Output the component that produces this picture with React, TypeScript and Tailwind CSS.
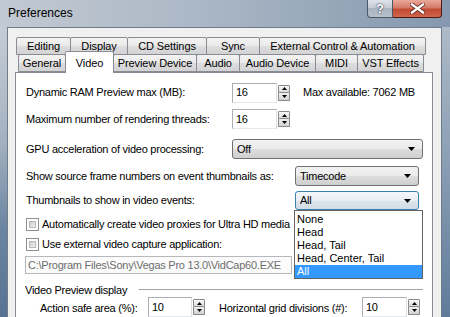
import React from "react";

const topTabs = [
  { label: "Editing", w: "w-[55px]" },
  { label: "Display", w: "w-[58px]" },
  { label: "CD Settings", w: "w-[80px]" },
  { label: "Sync", w: "w-[54px]" },
  { label: "External Control & Automation", w: "w-[167px]" },
];

const bottomTabs = [
  { label: "General", w: "w-[48px]", sel: false },
  { label: "Video", w: "w-[49px]", sel: true },
  { label: "Preview Device", w: "w-[84px]", sel: false },
  { label: "Audio", w: "w-[44px]", sel: false },
  { label: "Audio Device", w: "w-[77px]", sel: false },
  { label: "MIDI", w: "w-[43px]", sel: false },
  { label: "VST Effects", w: "w-[67px]", sel: false },
];

function Tab({ label, w }: { label: string; w: string }) {
  return (
    <div
      className={`${w} h-[18px] shrink-0 flex items-center justify-center border border-[#898c95] -ml-px first:ml-0 rounded-t-[2px] bg-[linear-gradient(#f3f3f3,#e9e9e9_50%,#dddddd_50%,#d3d3d3)] leading-none`}
    >
      {label}
    </div>
  );
}

function SelTab({ label, w }: { label: string; w: string }) {
  return (
    <div
      className={`${w} h-[22px] shrink-0 relative z-10 -mb-px -ml-px flex items-start justify-center pt-[6px] border border-b-0 border-[#898c95] rounded-t-[2px] bg-white leading-none`}
    >
      {label}
    </div>
  );
}

function Arrow() {
  return (
    <svg width="7" height="4" viewBox="0 0 7 4" className="shrink-0">
      <path d="M0 0 H7 L3.5 4 Z" fill="#000" />
    </svg>
  );
}

function Spin() {
  return (
    <div className="flex flex-col w-[12px] h-[16px] ml-px shrink-0">
      <div className="h-[8px] border border-[#8a8a8a] rounded-t-[1px] bg-[linear-gradient(#fbfbfb,#dcdcdc)] flex items-center justify-center">
        <svg width="5" height="3" viewBox="0 0 5 3">
          <path d="M0 3 L2.5 0 L5 3 Z" fill="#000" />
        </svg>
      </div>
      <div className="h-[8px] border border-t-0 border-[#8a8a8a] rounded-b-[1px] bg-[linear-gradient(#f0f0f0,#d2d2d2)] flex items-center justify-center">
        <svg width="5" height="3" viewBox="0 0 5 3">
          <path d="M0 0 L5 0 L2.5 3 Z" fill="#000" />
        </svg>
      </div>
    </div>
  );
}

function NumInput({ value, w }: { value: string; w: string }) {
  return (
    <div
      className={`${w} h-[20px] shrink-0 border border-[#abadb3] border-r-[#dbdfe6] border-b-[#e3e9ef] bg-white flex items-center pl-[3px]`}
    >
      {value}
    </div>
  );
}

function Combo({
  value,
  w,
  h,
  focused,
  children,
}: {
  value: string;
  w: string;
  h: string;
  focused?: boolean;
  children?: React.ReactNode;
}) {
  return (
    <div className={`relative ${w} ${h} shrink-0`}>
      <div
        className={`w-full h-full flex items-center justify-between pl-[4px] pr-[7px] rounded-[3px] border ${
          focused
            ? "border-[#3c7fb1] bg-[linear-gradient(#f4f7fa,#e9eef3_50%,#dde5ec_50%,#d3dde6)]"
            : "border-[#707070] bg-[linear-gradient(#f2f2f2,#ebebeb_50%,#dddddd_50%,#cfcfcf)]"
        }`}
      >
        <span>{value}</span>
        <Arrow />
      </div>
      {children}
    </div>
  );
}

function Check({ label }: { label: string }) {
  return (
    <div className="flex items-center h-[13px]">
      <div className="w-[13px] h-[13px] shrink-0 border border-[#8e8f8f] bg-white p-[2px]">
        <div className="w-full h-full bg-[linear-gradient(135deg,#cbcbcb,#f4f4f4)] border border-[#b8b8b8]" />
      </div>
      <span className="ml-[3px] whitespace-nowrap">{label}</span>
    </div>
  );
}

export default function App() {
  return (
    <div className="w-[450px] h-[317px] overflow-hidden flex flex-col font-['Liberation_Sans',Arial,sans-serif] text-[11px] text-black">
      {/* Title bar */}
      <div className="h-[27px] shrink-0 flex bg-[linear-gradient(to_right,#c2c9d2,#aab7c5_45%,#8598af)]">
        <div className="flex-1 pl-[8px] pt-[6px] text-[12px] leading-[14px]">Preferences</div>
        <div className="flex items-start pr-[8px]">
          <div className="w-[26px] h-[18px] border border-t-0 border-[#4b5867] rounded-bl-[4px] bg-[linear-gradient(#dfe4ea,#c2cad4_50%,#a9b4c1_50%,#b7c1cc)] flex items-center justify-center text-[13px] font-bold text-white leading-none [text-shadow:0_0_2px_#2d3a48,0_0_1px_#2d3a48]">
            ?
          </div>
          <div className="w-[49px] h-[18px] border border-t-0 border-l-0 border-[#4d1a12] rounded-br-[4px] bg-[linear-gradient(#e9a99b,#d47a69_45%,#c24a35_55%,#d0654b)] flex items-center justify-center">
            <svg width="15" height="11" viewBox="0 0 15 11">
              <path d="M2 1.5 L13 9.5 M13 1.5 L2 9.5" stroke="#5a2118" strokeWidth="4" strokeLinecap="square" />
              <path d="M2 1.5 L13 9.5 M13 1.5 L2 9.5" stroke="#ffffff" strokeWidth="2.4" strokeLinecap="square" />
            </svg>
          </div>
        </div>
      </div>

      {/* Body */}
      <div className="flex flex-1 min-h-0">
        <div className="w-[7px] shrink-0 bg-[linear-gradient(#c5ccd4,#a3b1c0_40%,#6a84a1_70%,#587392)]" />
        <div className="w-[435px] shrink-0 bg-[#f0f0f0] border-l border-t border-r border-[#6e7c8b] flex flex-col pt-[9px] pl-[7px] pr-[8px]">
          {/* Tabs row 1 */}
          <div className="flex h-[18px] pl-[1px] shrink-0 tracking-[-0.1px]">
            {topTabs.map((t) => (
              <Tab key={t.label} label={t.label} w={t.w} />
            ))}
          </div>
          {/* Tabs row 2 */}
          <div className="flex items-end h-[18px] pl-[3px] shrink-0 -mt-px tracking-[-0.1px]">
            {bottomTabs.map((t) =>
              t.sel ? (
                <SelTab key={t.label} label={t.label} w={t.w} />
              ) : (
                <Tab key={t.label} label={t.label} w={t.w} />
              )
            )}
          </div>

          {/* Panel */}
          <div className="flex-1 border border-[#898c95] bg-white pl-[10px] pr-[9px] pt-[9px] flex flex-col tracking-[-0.25px]">
            <div className="flex items-center h-[21px]">
              <div className="w-[206px] shrink-0">Dynamic RAM Preview max (MB):</div>
              <NumInput value="16" w="w-[45px]" />
              <Spin />
              <div className="ml-[13px]">Max available: 7062 MB</div>
            </div>
            <div className="flex items-center h-[20px] mt-[6px]">
              <div className="w-[206px] shrink-0">Maximum number of rendering threads:</div>
              <NumInput value="16" w="w-[45px]" />
              <Spin />
            </div>
            <div className="flex items-center h-[20px] mt-[10px]">
              <div className="w-[206px] shrink-0">GPU acceleration of video processing:</div>
              <Combo value="Off" w="w-[191px]" h="h-[20px]" />
            </div>
            <div className="flex items-center h-[20px] mt-[7px]">
              <div className="w-[269px] shrink-0">Show source frame numbers on event thumbnails as:</div>
              <Combo value="Timecode" w="w-[124px]" h="h-[20px]" />
            </div>
            <div className="flex items-center h-[19px] mt-[5px] relative z-20">
              <div className="w-[269px] shrink-0">Thumbnails to show in video events:</div>
              <Combo value="All" w="w-[124px]" h="h-[19px]" focused>
                <div className="absolute left-[-1px] top-[19px] w-[129px] h-[69px] border border-[#646464] bg-white pt-[2px] flex flex-col tracking-normal">
                  <div className="h-[13px] flex items-center pl-[2px]">None</div>
                  <div className="h-[13px] flex items-center pl-[2px]">Head</div>
                  <div className="h-[13px] flex items-center pl-[2px]">Head, Tail</div>
                  <div className="h-[13px] flex items-center pl-[2px]">Head, Center, Tail</div>
                  <div className="h-[13px] flex items-center pl-[2px] bg-[#3399ff] text-white">All</div>
                </div>
              </Combo>
            </div>
            <div className="mt-[8px]">
              <Check label="Automatically create video proxies for Ultra HD media" />
            </div>
            <div className="mt-[7px]">
              <Check label="Use external video capture application:" />
            </div>
            <div className="mt-[5px] -ml-px w-[267px] h-[18px] border border-[#b5b9bd] bg-[#fbfbfb] text-[#6d6d6d] flex items-center pl-[2px] whitespace-nowrap overflow-hidden">
              C:\Program Files\Sony\Vegas Pro 13.0\VidCap60.EXE
            </div>
            <div className="mt-[9px] h-[14px] flex items-center -ml-px">
              <span className="whitespace-nowrap">Video Preview display</span>
              <div className="flex-1 ml-[12px] h-[2px] border-t border-[#a0a0a0] border-b border-b-white" />
            </div>
            <div className="flex items-center h-[20px] pl-[14px]">
              <div className="w-[108px] shrink-0 pt-[2px]">Action safe area (%):</div>
              <NumInput value="10" w="w-[44px]" />
              <Spin />
              <div className="ml-[14px] w-[143px] shrink-0 pt-[2px]">Horizontal grid divisions (#):</div>
              <NumInput value="10" w="w-[45px]" />
              <Spin />
            </div>
          </div>
        </div>
        <div className="w-[8px] shrink-0 bg-[linear-gradient(#aebac7,#8fa2b7_40%,#5f7b99)]" />
      </div>
    </div>
  );
}
